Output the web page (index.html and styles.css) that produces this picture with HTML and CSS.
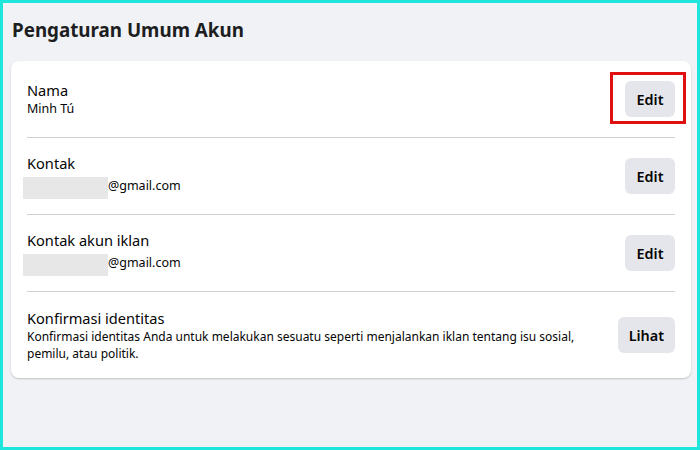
FILE: index.html
```html
<!DOCTYPE html>
<html lang="id">
<head>
<meta charset="utf-8">
<link rel="stylesheet" href="styles.css">
</head>
<body>
<div class="frame">
  <h1 class="title">Pengaturan Umum Akun</h1>
  <div class="card">
    <div class="row">
      <div class="info">
        <div class="label">Nama</div>
        <div class="value">Minh Tú</div>
      </div>
      <div class="btn-wrap">
        <button class="btn">Edit</button>
        <span class="highlight"></span>
      </div>
    </div>
    <div class="row">
      <div class="info">
        <div class="label">Kontak</div>
        <div class="value"><span class="redact"></span>@gmail.com</div>
      </div>
      <button class="btn">Edit</button>
    </div>
    <div class="row">
      <div class="info">
        <div class="label">Kontak akun iklan</div>
        <div class="value"><span class="redact"></span>@gmail.com</div>
      </div>
      <button class="btn">Edit</button>
    </div>
    <div class="row last">
      <div class="info">
        <div class="label">Konfirmasi identitas</div>
        <div class="value desc">Konfirmasi identitas Anda untuk melakukan sesuatu seperti menjalankan iklan tentang isu sosial, pemilu, atau politik.</div>
      </div>
      <button class="btn">Lihat</button>
    </div>
  </div>
</div>
</body>
</html>
```
FILE: styles.css
```css
html, body {
  margin: 0;
  padding: 0;
}
body {
  width: 700px;
  height: 450px;
  font-family: "Noto Sans", "Open Sans", sans-serif;
  color: #1c1e21;
}
.frame {
  box-sizing: border-box;
  width: 700px;
  height: 450px;
  border: 3px solid #1ee6dc;
  background: #f0f2f5;
  padding: 0 6px 0 8px;
}
.title {
  margin: 0;
  padding: 14px 0 0 1px;
  height: 58px;
  box-sizing: border-box;
  font-size: 18.8px;
  line-height: 26px;
  font-weight: 700;
  color: #1c1e21;
}
.card {
  background: #fff;
  border-radius: 8px;
  box-shadow: 0 1px 2px rgba(0,0,0,0.2);
  padding: 0 16px;
}
.row {
  display: flex;
  align-items: center;
  justify-content: space-between;
  padding: 19px 0;
  border-bottom: 1px solid #ced0d4;
  height: 38px;
}
.row.last {
  border-bottom: none;
  height: auto;
  padding: 16px 0 16px;
}
.info {
  display: flex;
  flex-direction: column;
}
.label {
  font-size: 14.6px;
  line-height: 20px;
  color: #050505;
}
.value {
  font-size: 12.5px;
  line-height: 18px;
  color: #050505;
  display: flex;
  align-items: center;
}
.value.desc {
  display: block;
  font-size: 12px;
  line-height: 17px;
  max-width: 575px;
}
.redact {
  display: inline-block;
  width: 85px;
  height: 22px;
  margin-left: -4px;
  margin-top: 4px;
  background: #e7e7e7;
}
.btn {
  font-family: inherit;
  font-size: 14.4px;
  font-weight: 600;
  color: #050505;
  background: #e4e6eb;
  border: none;
  border-radius: 6px;
  height: 36px;
  padding: 0 11px;
  min-width: 50px;
}
.btn-wrap {
  position: relative;
  display: flex;
}
.highlight {
  position: absolute;
  left: -15px;
  top: -9px;
  width: 76px;
  height: 52px;
  box-sizing: border-box;
  border: 3px solid #e01010;
}
```
